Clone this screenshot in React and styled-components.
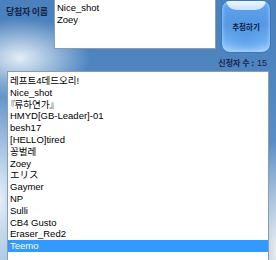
import React from 'react';
import styled, { createGlobalStyle } from 'styled-components';

const GlobalStyle = createGlobalStyle`
  html, body {
    margin: 0;
    padding: 0;
    background: #4f86c0;
  }
`;

const Window = styled.div`
  width: 276px;
  height: 260px;
  overflow: hidden;
  display: flex;
  flex-direction: column;
  font-family: "Liberation Sans", "Noto Sans CJK KR", sans-serif;
  background:
    radial-gradient(ellipse 70px 40px at 20px 58px, rgba(236, 243, 250, 0.95), rgba(236, 243, 250, 0) 100%),
    radial-gradient(ellipse 40px 120px at 0px 200px, rgba(236, 243, 250, 0.95), rgba(236, 243, 250, 0) 100%),
    radial-gradient(ellipse 30px 110px at 276px 250px, rgba(232, 236, 240, 1), rgba(232, 236, 240, 0) 100%),
    linear-gradient(180deg, #4a80bb 0%, #4f86c0 30%, #5b8fc6 60%, #7aa6d4 100%);
`;

const TopRow = styled.div`
  display: flex;
  align-items: flex-start;
  padding: 0 0 0 6px;
  height: 54px;
`;

const Label = styled.div`
  width: 48px;
  padding-top: 5px;
  font-family: "Noto Sans CJK KR", sans-serif;
  font-size: 9px;
  font-weight: 700;
  color: #14244a;
  letter-spacing: -0.3px;
  white-space: nowrap;
`;

const WinnerBox = styled.div`
  width: 162px;
  height: 50px;
  margin-top: -1px;
  box-sizing: border-box;
  background: #fff;
  border: 1px solid #8c9db2;
  padding: 2px 2px;
  font-size: 9.5px;
  line-height: 12px;
  color: #000;
`;

const DrawButton = styled.button`
  width: 50px;
  height: 53px;
  margin: 0 0 0 5px;
  padding: 0;
  position: relative;
  border: 1px solid #3a76bf;
  border-radius: 9px;
  background:
    radial-gradient(ellipse 24px 28px at 50% 55%, #559ae6, rgba(85, 154, 230, 0) 100%),
    linear-gradient(180deg, #62a5ee 0%, #5598e4 45%, #72b2f2 80%, #a2d0fa 100%);
  box-shadow: inset 0 0 4px rgba(180, 220, 255, 0.9);
  display: flex;
  align-items: center;
  justify-content: center;
  font-family: "Noto Sans CJK KR", sans-serif;
  font-size: 7.5px;
  font-weight: 700;
  color: #0e1c44;
  overflow: hidden;
`;

const Gloss = styled.span`
  position: absolute;
  left: 4px;
  right: 4px;
  top: -1px;
  height: 10px;
  border-radius: 0 0 10px 10px;
  background: linear-gradient(180deg, #f2f9ff, #c6e2fb);
`;

const CountRow = styled.div`
  display: flex;
  justify-content: flex-end;
  align-items: center;
  height: 17px;
  padding-right: 9px;
  font-family: "Noto Sans CJK KR", sans-serif;
  font-size: 8px;
  font-weight: 700;
  color: #14244a;
`;

const CountNum = styled.span`
  font-family: "Liberation Sans", sans-serif;
  font-size: 9px;
  font-weight: 400;
  margin-left: 3px;
`;

const ListBox = styled.div`
  margin-left: 7px;
  width: 262px;
  flex: 1;
  box-sizing: border-box;
  background: #fff;
  border: 1px solid #8c9db2;
  border-bottom: none;
  padding-top: 3px;
`;

const Item = styled.div`
  height: 11.8px;
  line-height: 11.8px;
  padding-left: 2px;
  font-size: 9.5px;
  white-space: nowrap;
  color: ${(p) => (p.$selected ? '#fff' : '#000')};
  background: ${(p) => (p.$selected ? '#3399ff' : 'transparent')};
`;

const Bracket = styled.span`
  margin-left: ${(p) => (p.$open ? '-4px' : '0')};
  margin-right: ${(p) => (p.$open ? '-1px' : '0')};
`;

const names = [
  '레프트4데드오리!',
  'Nice_shot',
  null,
  'HMYD[GB-Leader]-01',
  'besh17',
  '[HELLO]tired',
  '꽁벌레',
  'Zoey',
  'エリス',
  'Gaymer',
  'NP',
  'Sulli',
  'CB4 Gusto',
  'Eraser_Red2',
  'Teemo',
];

const App = () => (
  <>
    <GlobalStyle />
    <Window>
      <TopRow>
        <Label>당첨자 이름</Label>
        <WinnerBox>
          <div>Nice_shot</div>
          <div>Zoey</div>
        </WinnerBox>
        <DrawButton>
          <Gloss />
          추첨하기
        </DrawButton>
      </TopRow>
      <CountRow>
        신청자 수 :<CountNum>15</CountNum>
      </CountRow>
      <ListBox>
        {names.map((n, i) => (
          <Item key={i} $selected={n === 'Teemo'}>
            {n === null ? (
              <>
                <Bracket $open>『</Bracket>류하연가<Bracket>』</Bracket>
              </>
            ) : n}
          </Item>
        ))}
      </ListBox>
    </Window>
  </>
);

export default App;
